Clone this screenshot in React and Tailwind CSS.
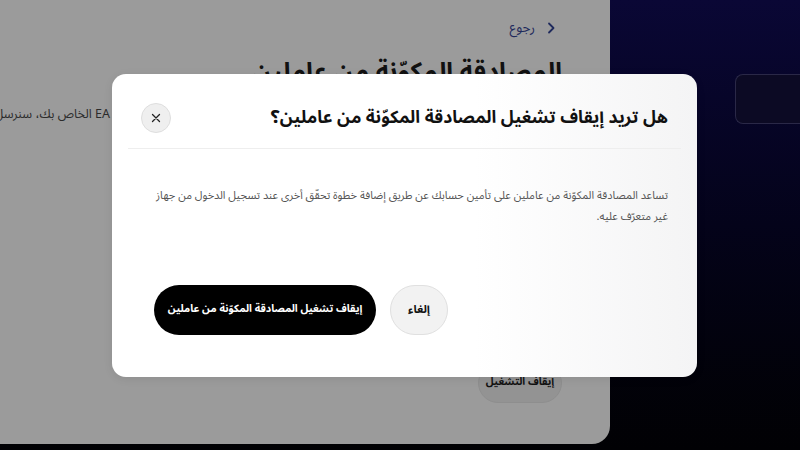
import React from "react";

function CloseIcon() {
  return (
    <svg width="10" height="10" viewBox="0 0 10 10" fill="none">
      <path d="M1.5 1.5 L8.5 8.5 M8.5 1.5 L1.5 8.5" stroke="#222" strokeWidth="1.3" strokeLinecap="round" />
    </svg>
  );
}

function Chevron() {
  return (
    <svg width="8" height="12" viewBox="0 0 8 12" fill="none">
      <path d="M2 1.5 L6.5 6 L2 10.5" stroke="#1f2a5c" strokeWidth="1.8" strokeLinecap="round" strokeLinejoin="round" />
    </svg>
  );
}

export default function App() {
  const font = { fontFamily: '"Noto Sans Arabic", "DejaVu Sans", sans-serif' };
  return (
    <div
      dir="ltr"
      className="relative w-[800px] h-[450px] overflow-hidden bg-gradient-to-b from-[#0a0735] via-[#04031a] to-[#010104]"
      style={font}
    >
      <div className="flex h-[444px] flex-row">
        {/* gray page panel */}
        <div className="w-[610px] h-[444px] shrink-0 overflow-hidden rounded-br-[18px] bg-[#9b9b9b]" dir="rtl">
          <div className="pr-[55px] pt-[18px]">
            <div className="flex items-center gap-[12px] text-[13.5px] text-[#1f2a5c] h-[20px]">
              <Chevron />
              <span>رجوع</span>
            </div>
            <h1 className="-mr-[7px] mt-[14px] whitespace-nowrap text-[25px] font-bold leading-[40px] text-[#111]">
              المصادقة المكوّنة من عاملين
            </h1>
            <div className="-mr-[7px] mt-[12px] flex whitespace-nowrap text-[12.5px] leading-[20px] text-[#2b2b2b]">
              <span className="w-[452px] shrink-0 overflow-hidden">
                عند تشغيل المصادقة المكوّنة من عاملين وتسجيل الدخول إلى حساب
              </span>
              <span className="shrink-0">EA الخاص بك، سنرسل إليك رمز أمان</span>
            </div>
            <div className="-mr-[7px] mt-[239px] flex">
              <div className="flex h-[40px] w-[84px] items-center justify-center rounded-full border border-[#8e8e8e] bg-[#939393] text-[10.5px] font-bold text-[#111]">
                إيقاف التشغيل
              </div>
            </div>
          </div>
        </div>
        {/* dark side content */}
        <div className="flex flex-1 justify-end pt-[74px]">
          <div className="w-[65px] h-[50px] rounded-l-[8px] border border-r-0 border-[#2a2847] bg-[#0c0a24]" />
        </div>
      </div>

      {/* modal */}
      <div dir="rtl" className="absolute left-[112px] top-[74px] w-[585px] h-[303px] rounded-[14px] bg-gradient-to-r from-white via-white via-[62%] to-[#f4f4f5] shadow-[0_2px_10px_rgba(0,0,0,0.08)]">
        <div className="mx-[16px] flex items-center justify-between border-b border-[#eeeeee] px-[13px] pt-[29px] pb-[15px]">
          <h2 className="whitespace-nowrap text-[17.5px] font-bold leading-[30px] text-[#111]">
            هل تريد إيقاف تشغيل المصادقة المكوّنة من عاملين؟
          </h2>
          <button className="flex h-[30px] w-[30px] items-center justify-center rounded-full border border-[#dedede] bg-[#efefef]">
            <CloseIcon />
          </button>
        </div>
        <p className="mx-[29px] mt-[36px] text-[11px] leading-[21px] text-[#555]">
          تساعد المصادقة المكوّنة من عاملين على تأمين حسابك عن طريق إضافة خطوة تحقّق أخرى عند تسجيل الدخول من جهاز غير متعرّف عليه.
        </p>
        <div className="mt-[58px] flex justify-end gap-[14px] pl-[42px]">
          <button className="flex h-[50px] w-[58px] items-center justify-center rounded-full border border-[#e0e0e0] bg-[#f2f2f2] text-[11.5px] font-bold text-[#111]">
            إلغاء
          </button>
          <button className="flex h-[50px] w-[222px] items-center justify-center whitespace-nowrap rounded-full bg-black text-[10.5px] font-bold text-white">
            إيقاف تشغيل المصادقة المكوّنة من عاملين
          </button>
        </div>
      </div>
    </div>
  );
}
